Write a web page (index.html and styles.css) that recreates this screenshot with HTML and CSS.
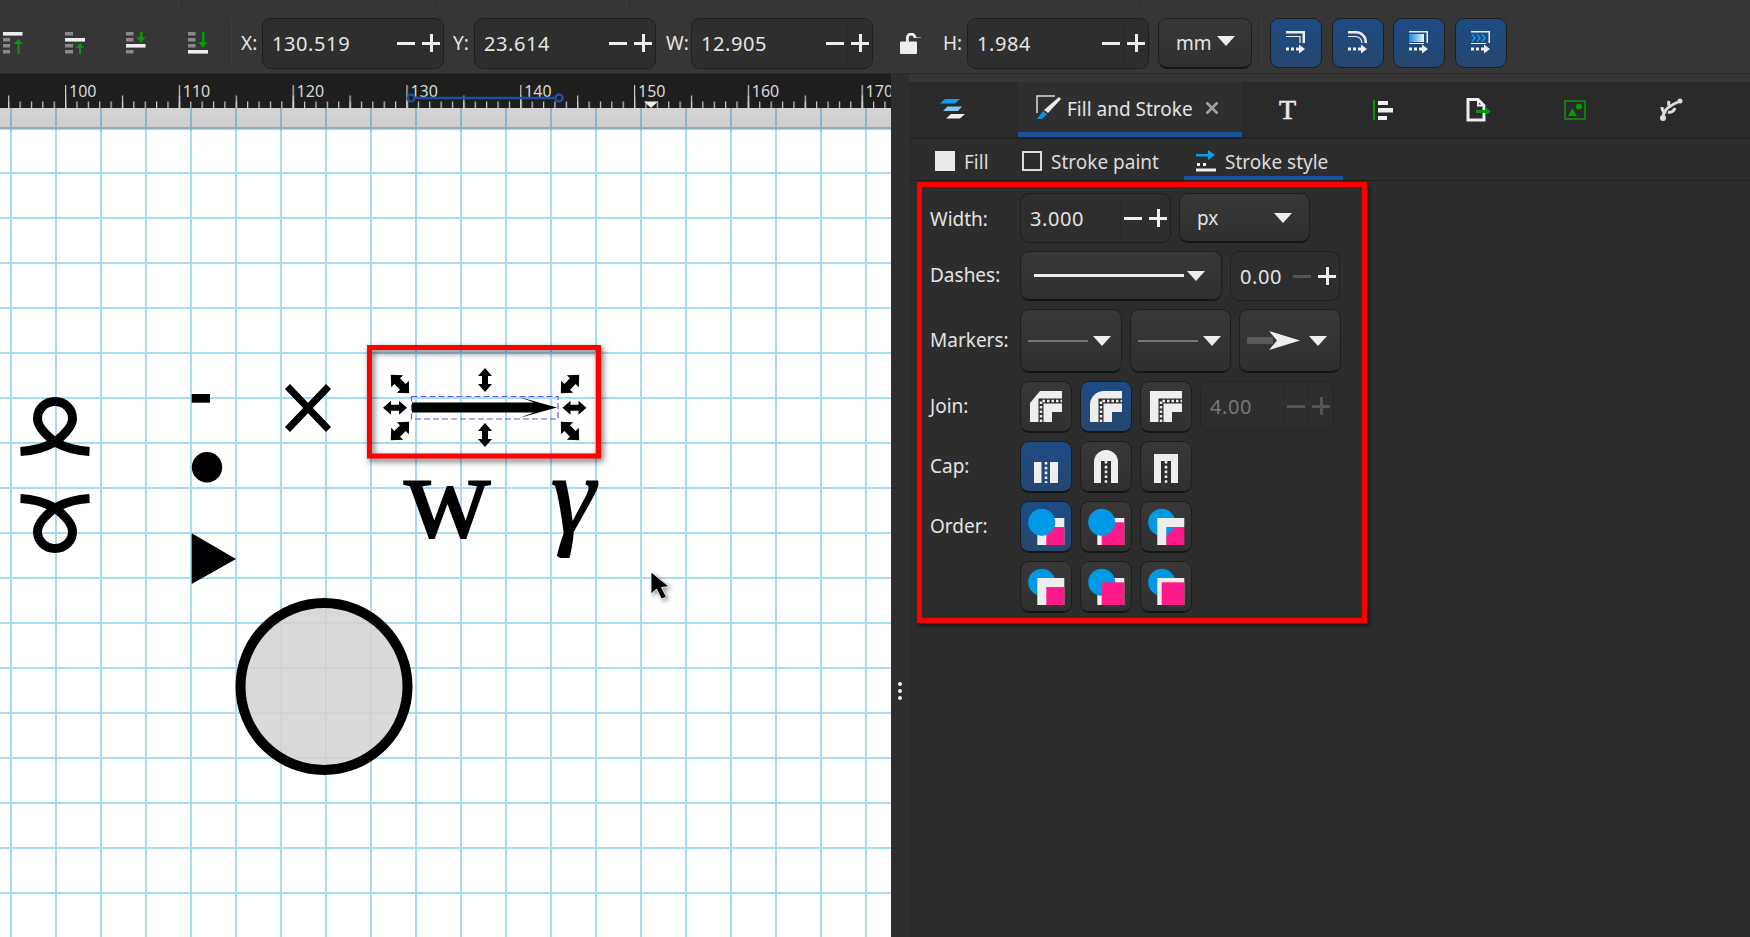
FILE: index.html
```html
<!DOCTYPE html>
<html>
<head>
  <title>Fill and Stroke</title>
  <link rel="stylesheet" href="styles.css">
</head>
<body>
  <!-- Shared icon parts -->
  <svg class="defs" width="0" height="0">
    <defs>
      <path id="handle-v" d="M0 -12L7 -4H3V4H7L0 12L-7 4H-3V-4H-7Z"/>
      <path id="handle-d" d="M0 -13L8.500 -4H4V4H8.500L0 13L-8.500 4H-4V-4H-8.500Z"/>
      <path id="loop" d="M20.500 451.500C32 451 44 448 55 442C46 435 37.500 427 37.500 418.500C37.500 409 45 401.500 55 401.500C65 401.500 72.500 409 72.500 418.500C72.500 427 64 435 55 442C66 448 78 451 89.500 451.500"/>
      <g id="dots-arrow">
        <path d="M0 16.500h3v3h-3zM5 16.500h3v3h-3zM10 16.500h4v3h-4z"/>
        <path d="M13 13.500L19 18L13 22.500Z"/>
      </g>
      <g id="join-dots" fill="none">
        <path d="M11 31V10H32" stroke="#2d2d2d" stroke-width="5"/>
        <path d="M11 31V10H32" stroke="#eee" stroke-width="2.500" stroke-dasharray="2.500 2"/>
      </g>
      <path id="cap-dots" d="M12 0V33" fill="none" stroke="#eee" stroke-width="2.600" stroke-dasharray="2.600 2.200"/>
      <path id="order-l" d="M17.300 17H44.300V26H26.300V44H17.300Z" fill="#eee"/>
      <circle id="order-dot" cx="21.700" cy="21.300" r="13.500" fill="#0099e6"/>
    </defs>
  </svg>

  <div class="toolbar">
    <div class="aligns">
      <svg class="align-icon" viewBox="0 0 20 24"><path class="ic-w" d="M0 0h19.500v3.600H0z"/><path class="ic-g" d="M0 6h7v3.400H0zM0 12h7v3.400H0zM0 18h7v3.400H0z"/><path class="ic-up" d="M14.500 22V12H10.500L15.500 7L20 12H16.500V22Z"/></svg>
      <svg class="align-icon" viewBox="0 0 20 24"><path class="ic-g" d="M0 0h8v3.600H0zM0 12h8v3.400H0zM0 18h8v3.400H0z"/><path class="ic-w" d="M0 6h20v3.600H0z"/><path class="ic-up" d="M14 22V16H11L15 11L19 16H16V22Z"/></svg>
      <svg class="align-icon" viewBox="0 0 20 24"><path class="ic-g" d="M0 0h7.500v3.600H0zM0 6h7.500v3.600H0zM0 18h7.500v3.400H0z"/><path class="ic-w" d="M0 12h19.500v3.600H0z"/><path class="ic-up" d="M14 0H16.500V5H19.500L15 11L10.500 5H14Z"/></svg>
      <svg class="align-icon" viewBox="0 0 20 24"><path class="ic-g" d="M0 0h7.500v3.600H0zM0 6h7.500v3.600H0zM0 12h7.500v3.600H0z"/><path class="ic-w" d="M0 18h20v3.600H0z"/><path class="ic-up" d="M14 0H16.500V10H19.500L15 16L10.500 10H14Z"/></svg>
    </div>
    <span class="tb-label lx">X:</span>
    <div class="spin spin-xl"><span class="spin-value">130.519</span><span class="step minus"></span><span class="step plus"></span></div>
    <span class="tb-label ly">Y:</span>
    <div class="spin spin-xl"><span class="spin-value">23.614</span><span class="step minus"></span><span class="step plus"></span></div>
    <span class="tb-label lw">W:</span>
    <div class="spin spin-xl"><span class="spin-value">12.905</span><span class="step minus"></span><span class="step plus"></span></div>
    <svg class="lock" viewBox="0 0 21 21"><path d="M0 9.500a1 1 0 0 1 1-1h5V5a5.200 5.200 0 0 1 10.400-.5H21v.5h-7.400V5a2.400 2.400 0 0 0-4.800 0v3.500H16a1 1 0 0 1 1 1V20a1 1 0 0 1-1 1H1a1 1 0 0 1-1-1Z"/></svg>
    <span class="tb-label lh">H:</span>
    <div class="spin spin-xl"><span class="spin-value">1.984</span><span class="step minus"></span><span class="step plus"></span></div>
    <div class="combo combo-unit"><span>mm</span><span class="caret"></span></div>
    <div class="tb-sep"></div>
    <div class="blue-tools">
      <div class="btn-blue"><svg class="btn-icon" viewBox="0 0 20 24"><path class="ic-w" d="M0 0H19V12H16.500V2.500H0Z"/><path class="ic-line" d="M0 5.500H14V12"/><use href="#dots-arrow" class="ic-w"/></svg></div>
      <div class="btn-blue"><svg class="btn-icon" viewBox="0 0 20 24"><path class="ic-w" d="M0 0H8A11 11 0 0 1 19 11V12H16.500V11A8.500 8.500 0 0 0 8 2.500H0Z"/><path class="ic-line" d="M0 5.500H7.500A6.500 6.500 0 0 1 14 12"/><use href="#dots-arrow" class="ic-w"/></svg></div>
      <div class="btn-blue"><svg class="btn-icon" viewBox="0 0 20 24"><defs><linearGradient id="fade"><stop offset="0" stop-color="#0a8fe0"/><stop offset="1" stop-color="#f0f0f0"/></linearGradient></defs><path class="ic-w" d="M0 0H19V12H17.500V1.500H0Z"/><rect x="0" y="3" width="15" height="8" fill="url(#fade)"/><path class="ic-w" d="M0 12h15v1H0z"/><use href="#dots-arrow" class="ic-w"/></svg></div>
      <div class="btn-blue"><svg class="btn-icon" viewBox="0 0 20 24"><path class="ic-w" d="M0 0H19V12H17.500V1.500H0Z"/><path class="ic-chev" d="M1 3.500L4 7L1 10.500M6 3.500L9 7L6 10.500M11 3.500L14 7L11 10.500"/><path class="ic-w" d="M0 12h15v1H0z"/><use href="#dots-arrow" class="ic-w"/></svg></div>
    </div>
  </div>

  <div class="workspace">
    <div class="canvas-col">
      <div class="ruler">
        <svg class="ruler-ticks" width="891" height="34">
          <defs>
            <pattern id="minor" width="11.38" height="34" patternUnits="userSpaceOnUse" x="8.100"><rect x="0" y="27.500" width="1.200" height="6.500" fill="#ccc"/></pattern>
            <pattern id="mid" width="56.900" height="34" patternUnits="userSpaceOnUse" x="8.100"><rect x="0" y="21.500" width="1.200" height="12.500" fill="#ccc"/></pattern>
            <pattern id="major" width="113.800" height="34" patternUnits="userSpaceOnUse" x="65"><rect x="0" y="11" width="1.200" height="23" fill="#ccc"/></pattern>
          </defs>
          <rect width="891" height="34" fill="url(#minor)"/>
          <rect width="891" height="34" fill="url(#mid)"/>
          <rect width="891" height="34" fill="url(#major)"/>
          <path class="ruler-sel" d="M411 24H559"/>
          <circle class="ruler-end" cx="411" cy="24" r="3.500"/>
          <circle class="ruler-end" cx="559" cy="24" r="3.500"/>
          <path d="M644 27.500H658L651 34Z" fill="#eee"/>
        </svg>
        <div class="ruler-labels">
          <span>100</span><span>110</span><span>120</span><span>130</span><span>140</span><span>150</span><span>160</span><span>170</span>
        </div>
      </div>
      <div class="page">
        <div class="page-edge"></div>
        <svg class="drawing" viewBox="0 108 891 829" width="891" height="829">
          <use class="loop" href="#loop"/>
          <use class="loop" href="#loop" transform="matrix(1 0 0 -1 0 950)"/>
          <rect x="191.700" y="394" width="18.300" height="8.700"/>
          <circle cx="207" cy="467.300" r="15.200"/>
          <path d="M191.700 533.300L236 559L191.700 584Z"/>
          <path class="cross" d="M287.500 386.500L328.500 429.500M328.500 386.500L287.500 429.500"/>
          <circle class="disc" cx="324" cy="686.500" r="83.500"/>

          <text class="sym-w" x="404" y="537">w</text>
          <text class="sym-gamma" x="551" y="533">γ</text>

          <rect class="callout" x="369.500" y="347.500" width="229" height="108.500"/>
          <path d="M412 402.500H534L519 397L557 407.500L519 418L534 412.500H412Z"/>
          <rect class="sel-box" x="411.500" y="396.500" width="146.500" height="22.500"/>
          <use href="#handle-v" transform="translate(485 380)"/>
          <use href="#handle-v" transform="translate(485 435)"/>
          <use href="#handle-v" transform="translate(395 407.700) rotate(90)"/>
          <use href="#handle-v" transform="translate(574.500 407.700) rotate(90)"/>
          <use href="#handle-d" transform="translate(400 384) rotate(-45)"/>
          <use href="#handle-d" transform="translate(570 384) rotate(45)"/>
          <use href="#handle-d" transform="translate(400 431) rotate(45)"/>
          <use href="#handle-d" transform="translate(570 431) rotate(-45)"/>

          <path class="pointer" d="M651 572V594L656.500 589L661.500 599L666.500 597L661.500 587.500L669 586.500Z"/>
        </svg>
      </div>
    </div>

    <div class="gutter"><span></span><span></span><span></span></div>

    <div class="dock">
      <div class="dock-tabs">
        <div class="dock-tab tab-layers">
          <svg class="tab-icon" width="26" height="22" viewBox="0 0 26 22"><path d="M5 0H20L15 4.500H0Z" fill="#0ea0f0"/><path d="M7.500 7.500H22L18 12H3Z" fill="#80caf2"/><path d="M11 15H25L20 19.500H6Z" fill="#eee"/></svg>
        </div>
        <div class="dock-tab tab-active">
          <svg class="tab-icon" width="26" height="26" viewBox="0 0 26 26"><path d="M1 18V1H19" fill="none" stroke="#ddd" stroke-width="1.500"/><path d="M23 2L25 4L12 18L8 15Z" fill="#eee"/><path d="M7 16L11 19L6 24H1Z" fill="#0e90e0"/></svg>
          <span class="tab-title">Fill and Stroke</span>
          <svg class="tab-close" width="14" height="14" viewBox="0 0 14 14"><path d="M1.500 1.500L12.500 12.500M12.500 1.500L1.500 12.500"/></svg>
        </div>
        <div class="dock-tab"><span class="tab-t">T</span></div>
        <div class="dock-tab">
          <svg width="22" height="22" viewBox="0 0 22 22"><rect x="1" y="1" width="2" height="20" fill="#0a960a"/><path d="M6 2h10v4H6zM6 9h15v4.500H6zM6 17h9v4H6z" fill="#eee"/></svg>
        </div>
        <div class="dock-tab">
          <svg width="26" height="24" viewBox="0 0 26 24"><path d="M2 1.500H12L18 7.500V22H2Z" fill="none" stroke="#eee" stroke-width="3"/><path d="M12 1.500V7.500H18" fill="none" stroke="#eee" stroke-width="2"/><path d="M10 12H19V8.500L25 13.500L19 18V15H10Z" fill="#0a960a"/></svg>
        </div>
        <div class="dock-tab">
          <svg width="22" height="20" viewBox="0 0 22 20"><rect x="1" y="1" width="20" height="18" fill="none" stroke="#0a960a" stroke-width="1.500"/><path d="M4 16L8.500 8.500L13 16Z" fill="#0a960a"/><circle cx="15" cy="6.500" r="3" fill="#0a960a"/></svg>
        </div>
        <div class="dock-tab">
          <svg width="24" height="24" viewBox="0 0 24 24"><g fill="none" stroke="#ddd" stroke-width="3"><path d="M4 20C4 13 8 9 19 4"/><path d="M3 9C3 13 5 15 7 14"/><path d="M10 3C9 6 10 9 12 8"/><path d="M9 14C12 15 15 13 16 10"/></g><circle cx="4" cy="20" r="3" fill="#ddd"/><circle cx="21" cy="3" r="2.500" fill="#ddd"/></svg>
        </div>
      </div>

      <div class="dock-body">
        <div class="subtabs">
          <div class="subtab st-fill"><span class="swatch"></span>Fill</div>
          <div class="subtab st-paint"><span class="swatch swatch-line"></span>Stroke paint</div>
          <div class="subtab st-style">
            <svg width="20" height="22" viewBox="0 0 20 22"><path d="M0 5H12V1L19 6L12 11V7.500H0Z" fill="#0e9ae8" transform="translate(0 -1)"/><path d="M1 13h3v3H1zM7 13h3v3H7z" fill="#eee"/><rect x="0" y="18.500" width="20" height="3" fill="#eee"/></svg>
            Stroke style
          </div>
        </div>

        <div class="callout-box">
          <div class="row r-50">
            <span class="row-label label-down">Width:</span>
            <div class="row-ctl">
              <div class="spin spin-w"><span class="spin-value">3.000</span><span class="step minus"></span><span class="step plus"></span></div>
              <div class="combo combo-px"><span>px</span><span class="caret"></span></div>
            </div>
          </div>
          <div class="row r-50">
            <span class="row-label">Dashes:</span>
            <div class="row-ctl">
              <div class="combo combo-dash"><span class="dash-line"></span><span class="caret"></span></div>
              <div class="spin spin-s"><span class="spin-value">0.00</span><span class="step minus off"></span><span class="step plus"></span></div>
            </div>
          </div>
          <div class="row r-64">
            <span class="row-label">Markers:</span>
            <div class="row-ctl">
              <div class="combo combo-marker"><span class="marker-line"></span><span class="caret"></span></div>
              <div class="combo combo-marker"><span class="marker-line"></span><span class="caret"></span></div>
              <div class="combo combo-marker">
                <svg width="54" height="20" viewBox="0 0 54 20"><rect x="0" y="6" width="26" height="7" fill="#5a5a5a"/><path d="M22 0L53 9.500L22 19L30 9.500Z" fill="#eee"/></svg>
                <span class="caret"></span>
              </div>
            </div>
          </div>
          <div class="row r-52">
            <span class="row-label">Join:</span>
            <div class="row-ctl">
              <div class="btn"><svg class="ic32" viewBox="0 0 32 32"><path class="ic-w" d="M0 31V12L10 0H32V21H22V31Z"/><use href="#join-dots"/></svg></div>
              <div class="btn btn-on"><svg class="ic32" viewBox="0 0 32 32"><path class="ic-w" d="M0 31V14A14 14 0 0 1 14 0H32V21H22V31Z"/><use href="#join-dots"/></svg></div>
              <div class="btn"><svg class="ic32" viewBox="0 0 32 32"><path class="ic-w" d="M0 31V0H32V21H22V31Z"/><use href="#join-dots"/></svg></div>
              <div class="spin spin-off"><span class="spin-value">4.00</span><span class="step minus"></span><span class="step plus"></span></div>
            </div>
          </div>
          <div class="row r-52">
            <span class="row-label">Cap:</span>
            <div class="row-ctl">
              <div class="btn btn-on"><svg class="ic-cap" viewBox="0 0 24 33"><path class="ic-w" d="M0 12h7.500v21H0zM16 12h8v21h-8z"/><path d="M12 12V33" fill="none" stroke="#eee" stroke-width="2.600" stroke-dasharray="2.600 2.200"/></svg></div>
              <div class="btn"><svg class="ic-cap" viewBox="0 0 24 33"><path class="ic-w" d="M0 33V12A12 12 0 0 1 24 12V33Z"/><rect x="7" y="11" width="10" height="22" fill="#2d2d2d"/><use href="#cap-dots" transform="translate(0 11)"/></svg></div>
              <div class="btn"><svg class="ic-cap" viewBox="0 0 24 33"><path class="ic-w" d="M0 33V4H24V33Z"/><rect x="7" y="11" width="10" height="22" fill="#2d2d2d"/><use href="#cap-dots" transform="translate(0 11)"/></svg></div>
            </div>
          </div>
          <div class="row r-52">
            <span class="row-label">Order:</span>
            <div class="row-ctl">
              <div class="btn btn-on"><svg class="ic52" viewBox="0 0 52 52"><rect x="17.300" y="17" width="27" height="27" fill="#eee"/><rect class="pink" x="26.300" y="26" width="18" height="18"/><use href="#order-dot"/></svg></div>
              <div class="btn"><svg class="ic52" viewBox="0 0 52 52"><rect x="17.300" y="17" width="27" height="27" fill="#eee"/><rect class="pink" x="21.700" y="21.300" width="22.600" height="22.700"/><use href="#order-dot"/></svg></div>
              <div class="btn"><svg class="ic52" viewBox="0 0 52 52"><rect class="pink" x="26.300" y="26" width="18" height="18"/><use href="#order-dot"/><use href="#order-l"/></svg></div>
            </div>
          </div>
          <div class="row r-52">
            <span class="row-label"></span>
            <div class="row-ctl">
              <div class="btn"><svg class="ic52" viewBox="0 0 52 52"><use href="#order-dot"/><rect x="17.300" y="17" width="27" height="27" fill="#eee"/><rect class="pink" x="26.300" y="26" width="18" height="18"/></svg></div>
              <div class="btn"><svg class="ic52" viewBox="0 0 52 52"><rect x="17.300" y="17" width="27" height="27" fill="#eee"/><use href="#order-dot"/><rect class="pink" x="21.700" y="21.300" width="22.600" height="22.700"/></svg></div>
              <div class="btn"><svg class="ic52" viewBox="0 0 52 52"><use href="#order-dot"/><rect x="17.300" y="17" width="27" height="27" fill="#eee"/><rect class="pink" x="21.700" y="21.300" width="22.600" height="22.700"/></svg></div>
            </div>
          </div>
        </div>
      </div>
    </div>
  </div>
</body>
</html>
```

FILE: styles.css
```css
* {
  box-sizing: border-box;
}
html, body {
  height: 100%;
}
body {
  margin: 0;
  width: 1750px;
  height: 937px;
  overflow: hidden;
  background-color: #343434;
  color: #e4e4e4;
  font-family: "Noto Sans", sans-serif;
  font-size: 19px;
}
.defs {
  position: absolute;
}
svg {
  display: block;
  flex: none;
}

/* shared icon colours */
.ic-w {
  fill: #eee;
}
.ic-g {
  fill: #8a8a8a;
}
.ic-up {
  fill: #0a960a;
}
.ic-line {
  fill: none;
  stroke: #eee;
  stroke-width: 1.2;
}
.ic-chev {
  fill: none;
  stroke: #0e9ae8;
  stroke-width: 1.6;
}

/* top toolbar */
.toolbar {
  display: flex;
  align-items: center;
  height: 74px;
  padding-top: 13px;
  background-color: #363636;
  background-image:
    linear-gradient(#2c2c2c, #2c2c2c),
    linear-gradient(#2c2c2c, #2c2c2c),
    linear-gradient(#2c2c2c, #2c2c2c),
    linear-gradient(#2c2c2c, #2c2c2c);
  background-size: 1px 6px;
  background-repeat: no-repeat;
  background-position: 181px 0, 436px 0, 629px 0, 1140px 0;
  border-bottom: 1px solid #2a2a2a;
}
.aligns {
  display: flex;
  gap: 41.500px;
  width: 232px;
  height: 50px;
  padding-left: 3px;
  align-items: center;
  border-right: 1px solid #3d3d3d;
}
.align-icon {
  width: 20px;
  height: 24px;
  margin-top: 1px;
}
.tb-label {
  color: #e4e4e4;
}
.lx {
  width: 21px;
  margin-left: 9px;
}
.ly {
  width: 21px;
  margin-left: 9px;
}
.lw {
  width: 25px;
  margin-left: 10px;
}
.lh {
  width: 24px;
  margin-left: 22px;
}
.lock {
  width: 21px;
  height: 21px;
  margin-left: 27px;
  fill: #eee;
}

.spin {
  display: flex;
  align-items: stretch;
  height: 50px;
  border: 1px solid #1e1e1e;
  border-radius: 9px;
  background-color: #2e2e2e;
}
.spin-xl {
  width: 182px;
  height: 51px;
}
.spin-w {
  width: 151px;
}
.spin-s {
  width: 110px;
}
.spin-off {
  width: 134px;
  margin-left: 0;
  color: #777;
  border-color: #262626;
}
.spin-value {
  flex: 1;
  padding-left: 9px;
  align-self: center;
  font-size: 20px;
  letter-spacing: 0.6px;
}
.step {
  position: relative;
  width: 25px;
  border-left: 1px solid #2a2a2a;
}
.step::before {
  content: "";
  position: absolute;
  left: 3px;
  top: 50%;
  width: 18px;
  height: 3px;
  margin-top: -1.500px;
  background-color: #eee;
}
.plus::after {
  content: "";
  position: absolute;
  left: 10.500px;
  top: 50%;
  width: 3px;
  height: 18px;
  margin-top: -9px;
  background-color: #eee;
}
.step.off::before {
  background-color: #555;
}
.spin-off .step::before,
.spin-off .step::after {
  background-color: #555;
}

.combo {
  display: flex;
  align-items: center;
  height: 50px;
  border: 1px solid #1e1e1e;
  border-bottom: 2px solid #161616;
  border-radius: 9px;
  background: linear-gradient(#383838, #303030);
}
.caret {
  width: 0;
  height: 0;
  border-left: 9px solid transparent;
  border-right: 9px solid transparent;
  border-top: 10px solid #eee;
}
.combo-unit {
  gap: 5px;
  width: 94px;
  height: 51px;
  margin-left: 9px;
  padding-left: 17px;
}
.combo-unit .caret {
  margin-top: -4px;
}
.combo-px {
  justify-content: space-between;
  width: 131px;
  padding: 0 17px 0 17px;
}
.combo-dash {
  width: 202px;
  padding-left: 13px;
  gap: 3px;
}
.dash-line {
  width: 150px;
  height: 3px;
  background-color: #eee;
}
.combo-marker {
  gap: 5px;
  width: 101.500px;
  height: 64px;
  padding-left: 7px;
}
.combo-marker svg {
  margin-right: 3px;
}
.marker-line {
  width: 60px;
  height: 2px;
  background-color: #777;
}
.tb-sep {
  width: 1px;
  height: 50px;
  margin: 0 8px 0 9px;
  background-color: #3e3e3e;
}
.blue-tools {
  display: flex;
  gap: 9.500px;
}
.btn-blue {
  display: flex;
  align-items: center;
  justify-content: center;
  width: 52px;
  height: 50px;
  border: 1px solid #1e1e1e;
  border-radius: 9px;
  background: linear-gradient(#1d4b85, #26466e);
}
.btn-icon {
  width: 20px;
  height: 24px;
}

/* canvas */
.workspace {
  display: flex;
  height: 863px;
}
.canvas-col {
  display: flex;
  flex-direction: column;
  width: 891px;
  overflow: hidden;
}
.ruler {
  position: relative;
  height: 34px;
  background-color: #1e1e1e;
  overflow: hidden;
}
.ruler-ticks {
  position: absolute;
  left: 0;
  top: 0;
}
.ruler-sel {
  stroke: #1a519c;
  stroke-width: 2.500;
  fill: none;
}
.ruler-end {
  stroke: #1a519c;
  stroke-width: 2.500;
  fill: #1e1e1e;
}
.ruler-labels {
  display: flex;
  margin-left: 69px;
  padding-top: 6px;
  font-size: 16px;
  line-height: 22px;
  color: #d8d8d8;
}
.ruler-labels span {
  flex: none;
  width: 113.800px;
}
.page {
  position: relative;
  flex: 1;
  background-color: #fff;
  background-image:
    linear-gradient(90deg, #a8dcf5 2px, transparent 2px),
    linear-gradient(#a8dcf5 2px, transparent 2px);
  background-size: 45px 45px;
  background-position: 10px 0, 0 19px;
}
.page-edge {
  height: 22px;
  background: linear-gradient(rgba(0, 0, 0, 0.17), rgba(0, 0, 0, 0.2));
}
.drawing {
  position: absolute;
  left: 0;
  top: 0;
}
.loop {
  fill: none;
  stroke: #000;
  stroke-width: 9;
}
.cross {
  fill: none;
  stroke: #000;
  stroke-width: 7;
}
.disc {
  fill: rgba(210, 210, 210, 0.85);
  stroke: #000;
  stroke-width: 10;
}
.sym-w {
  font-family: "Liberation Serif", serif;
  font-size: 120px;
  stroke: #000;
  stroke-width: 1.800;
}
.sym-gamma {
  font-family: "Liberation Serif", serif;
  font-style: italic;
  font-size: 112px;
  stroke: #000;
  stroke-width: 1.800;
}
.callout {
  fill: none;
  stroke: #f00;
  stroke-width: 5;
  filter: drop-shadow(2px 3px 3px rgba(0, 0, 0, 0.6));
}
.sel-box {
  fill: none;
  stroke: #5a5ae6;
  stroke-width: 1.200;
  stroke-dasharray: 6 3;
}
.pointer {
  stroke: #fff;
  stroke-width: 0.800;
  filter: drop-shadow(2px 2px 2px rgba(0, 0, 0, 0.4));
}

/* splitter between canvas and dock */
.gutter {
  display: flex;
  flex-direction: column;
  align-items: center;
  justify-content: center;
  gap: 3px;
  width: 20px;
  padding: 370px 2px 0 0;
  background-color: #2e2e2e;
  border-right: 1px solid #222;
}
.gutter span {
  width: 4px;
  height: 4px;
  border-radius: 50%;
  background-color: #eee;
}

/* right dock */
.dock {
  display: flex;
  flex-direction: column;
  flex: 1;
}
.dock-tabs {
  display: flex;
  align-items: center;
  height: 63px;
  padding-top: 8px;
  margin-left: -2px;
  background: linear-gradient(#363636 8px, #2a2a2a 8px);
}
.dock-tab {
  display: flex;
  align-items: center;
  justify-content: center;
  width: 90px;
  height: 55px;
  margin-right: 6px;
}
.tab-layers {
  width: 109px;
  margin-right: 0;
  padding-right: 22px;
}
.tab-active {
  justify-content: flex-start;
  width: 224px;
  margin-right: 0;
  padding-left: 18px;
  background-color: #2f2f2f;
  border-bottom: 5px solid #1a519c;
}
.tab-icon {
  flex: none;
}
.tab-active .tab-icon {
  margin: 2px 5px 0 0;
}
.tab-title {
  line-height: 1;
  margin-top: 4px;
}
.tab-close {
  margin: 2px 0 0 12px;
  fill: none;
  stroke: #a0a0a0;
  stroke-width: 2.500;
}
.tab-t {
  font-family: "Liberation Serif", serif;
  font-size: 28px;
  line-height: 1;
  color: #e8e8e8;
  -webkit-text-stroke: 0.6px #e8e8e8;
  margin-right: -1px;
}
.dock-body {
  flex: 1;
  background-color: #2d2d2d;
  border-top: 2px solid #222;
}
.subtabs {
  display: flex;
  height: 42px;
  padding-left: 12px;
  border-bottom: 1px solid #232323;
}
.subtab {
  display: flex;
  align-items: center;
  gap: 9px;
  padding-left: 12px;
  padding-top: 5px;
  color: #dcdcdc;
}
.st-fill {
  width: 87px;
}
.st-paint {
  width: 174px;
}
.st-style {
  width: 159px;
  border-bottom: 4px solid #1a519c;
  padding-top: 9px;
}
.swatch {
  width: 20px;
  height: 20px;
  margin-top: -3px;
  background-color: #eaeaea;
}
.swatch-line {
  background-color: transparent;
  border: 2.500px solid #dcdcdc;
}
.st-style svg {
  margin-top: -3px;
}

/* red box round the stroke style form */
.callout-box {
  display: flex;
  flex-direction: column;
  gap: 8px;
  width: 450px;
  height: 441px;
  margin: 1px 0 0 6px;
  padding: 6px 0 0 8px;
  border: 5px solid #f00;
  box-shadow: 2px 3px 4px rgba(0, 0, 0, 0.5);
}
.row {
  display: grid;
  grid-template-columns: 90px 1fr;
  align-items: center;
}
.row-label {
  margin-top: -2px;
}
.row-label.label-down {
  margin-top: 1px;
}
.r-50 {
  height: 50px;
}
.r-64 {
  height: 64px;
}
.r-52 {
  height: 52px;
}
.row-ctl {
  display: flex;
  gap: 8px;
}
.btn {
  display: flex;
  align-items: center;
  justify-content: center;
  width: 52px;
  height: 52px;
  border: 1px solid #1e1e1e;
  border-bottom: 2px solid #161616;
  border-radius: 9px;
  background: linear-gradient(#383838, #303030);
}
.btn-on {
  background: linear-gradient(#1d4b85, #26466e);
}
.ic32 {
  width: 32px;
  height: 32px;
}
.ic-cap {
  width: 24px;
  height: 33px;
}
.ic52 {
  width: 52px;
  height: 52px;
  margin: -1px;
}
.pink {
  fill: #ff1a8c;
}
```
